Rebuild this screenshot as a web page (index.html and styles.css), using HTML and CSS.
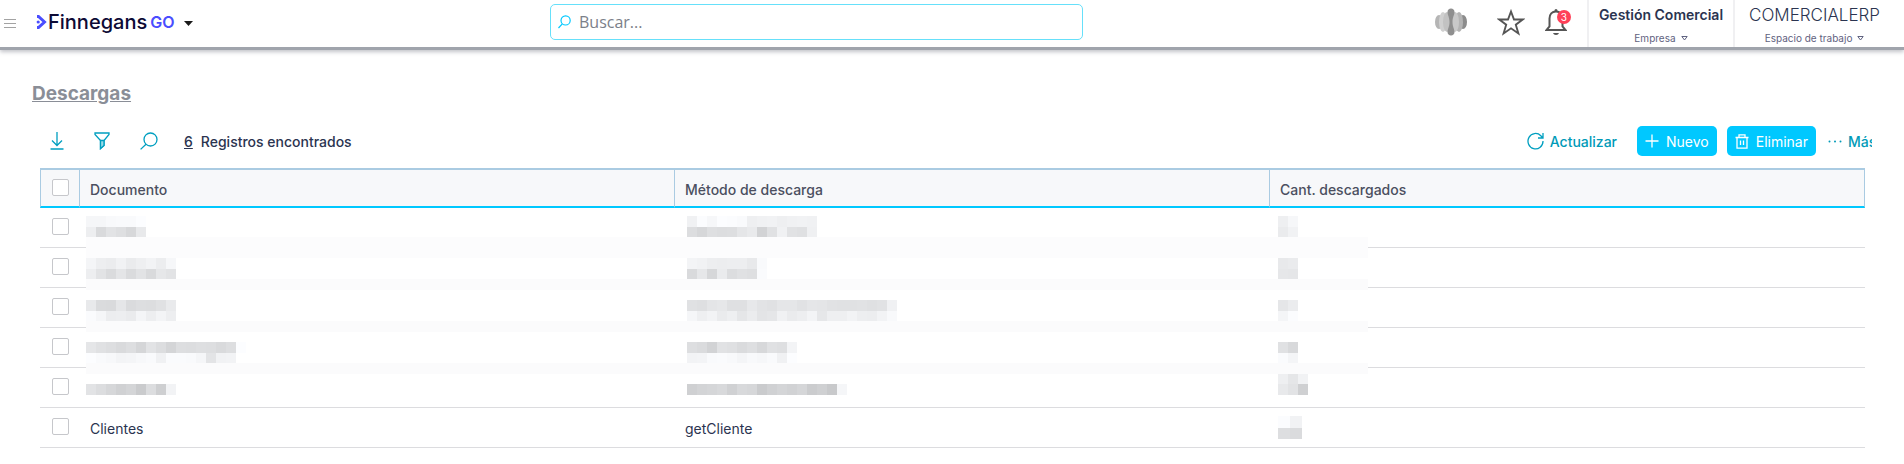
FILE: index.html
```html
<!doctype html>
<html lang="es">
<head>
	<meta charset="utf-8">
	<title>Descargas</title>
	<link rel="stylesheet" href="styles.css">
</head>
<body>
	<header class="topbar">
		<div class="topbar-left">
			<button class="icon-btn menu" type="button" aria-label="Menú">
				<svg width="12" height="12" viewBox="0 0 12 12"><path d="M0 1.5h12M0 5.5h12M0 9.5h12" stroke="#a3a3a3"/></svg>
			</button>
			<a class="brand" href="#">
				<svg width="11" height="14" viewBox="0 0 11 14" fill="none" stroke="#4a4dff" stroke-width="3"><path d="M1 1.5h1.5L8.5 7l-6 5.500H1"/><circle cx="2.200" cy="7" r="1.600" fill="#4a4dff" stroke="none"/></svg>
				<span class="brand-name">Finnegans</span><span class="brand-go">GO</span>
			</a>
			<button class="icon-btn" type="button" aria-label="Productos">
				<svg width="9" height="5" viewBox="0 0 9 5"><path d="M0 0h9L4.500 5z" fill="#1a1a1a"/></svg>
			</button>
		</div>
		<label class="search">
			<svg width="13" height="14" viewBox="0 0 13 14" fill="none" stroke="#00c8ff" stroke-width="1.2"><circle cx="7.6" cy="5.4" r="4.6"/><path d="M4.300 8.800L.5 13"/></svg>
			<input type="text" placeholder="Buscar..." aria-label="Buscar">
		</label>
		<div class="topbar-right">
			<button class="icon-btn assistant" type="button" aria-label="Asistente">
				<svg width="32" height="28" viewBox="0 0 32 28">
					<ellipse cx="4" cy="14" rx="4" ry="7" fill="#b5b5b5"/>
					<ellipse cx="28" cy="14" rx="4" ry="7" fill="#8c8c8c"/>
					<ellipse cx="8" cy="14" rx="4" ry="10" fill="#d0d0d0"/>
					<ellipse cx="24" cy="14" rx="4" ry="10" fill="#b4b4b4"/>
					<ellipse cx="12" cy="14" rx="4" ry="10" fill="#c2c2c2"/>
					<ellipse cx="20" cy="14" rx="4" ry="10" fill="#c9c9c9"/>
					<path d="M16 .5c2 0 3.500 1.500 3.500 3.500 0 3-2 5-2 10s2 7 2 10c0 2-1.500 3.500-3.500 3.500s-3.500-1.500-3.500-3.500c0-3 2-5 2-10s-2-7-2-10C12.500 2 14 .5 16 .5z" fill="#8f8f8f"/>
				</svg>
			</button>
			<button class="icon-btn" type="button" aria-label="Favoritos">
				<svg width="28" height="27" viewBox="0 0 28 27" fill="none" stroke="#555" stroke-width="1.900"><path d="M14 2.500l3 8h8.800l-7 5.200 2.600 8.800-7.400-5.200-7.400 5.200 2.600-8.800-7-5.200H11z"/></svg>
			</button>
			<button class="icon-btn bell" type="button" aria-label="Notificaciones">
				<svg width="22" height="26" viewBox="0 0 22 26"><path d="M11 2.500c-4 0-6.500 3-6.500 7v8L1.500 21h19l-3-3.500v-8c0-4-2.500-7-6.500-7z" fill="none" stroke="#555" stroke-width="2"/><path d="M9.500 2.500V1.500a1.500 1.500 0 0 1 3 0v1zM8 24h6c-.5 1.300-1.500 2-3 2s-2.500-.7-3-2z" fill="#555"/></svg>
				<span class="badge">3</span>
			</button>
			<button class="selector" type="button">
				<span class="selector-name company">Gestión Comercial</span>
				<span class="selector-label">Empresa <svg width="7" height="5" viewBox="0 0 7 5"><path d="M.8.5h5.400L3.500 4z" fill="none" stroke="#5f6280"/></svg></span>
			</button>
			<button class="selector workspace" type="button">
				<span class="selector-name">COMERCIALERP</span>
				<span class="selector-label">Espacio de trabajo <svg width="7" height="5" viewBox="0 0 7 5"><path d="M.8.5h5.400L3.500 4z" fill="none" stroke="#5f6280"/></svg></span>
			</button>
		</div>
	</header>

	<main>
		<h1><a href="#">Descargas</a></h1>

		<div class="toolbar">
			<div class="tools">
				<button class="icon-btn" type="button" aria-label="Descargar">
					<svg width="14" height="18" viewBox="0 0 14 18"><path d="M7 0v13M2 8.500L7 13.500l5-5M.5 17h13"/></svg>
				</button>
				<button class="icon-btn" type="button" aria-label="Filtrar">
					<svg width="16" height="18" viewBox="0 0 16 18"><path d="M1 1h14v1.500L10 8.500v5L6.500 16.500v-8L1 2.500z"/><path d="M6.500 8.500H10v5l-3.500 3z" fill="#9adbe8"/></svg>
				</button>
				<button class="icon-btn" type="button" aria-label="Buscar en la lista">
					<svg width="18" height="18" viewBox="0 0 18 18"><circle cx="10.500" cy="7.500" r="6.500"/><path d="M6 12.200L.6 17.400"/></svg>
				</button>
				<p class="count"><a href="#">6</a>Registros encontrados</p>
			</div>
			<div class="actions">
				<button class="link-btn refresh" type="button">
					<svg width="17" height="18" viewBox="0 0 17 18"><path d="M16 9A7.500 7.700 0 1 1 13.800 3.700L16 6M16 1v5h-5"/></svg>
					Actualizar
				</button>
				<button class="btn" type="button">
					<svg width="14" height="14" viewBox="0 0 14 14"><path d="M7 .5v13M.5 7h13"/></svg>
					Nuevo
				</button>
				<button class="btn" type="button">
					<svg width="14" height="15" viewBox="0 0 14 15"><path d="M.5 3.500h13M4 3.500V.8h6v2.700M2 3.500v10.700h10V3.500M5.500 6.500v4.500M8.500 6.500v4.500"/></svg>
					Eliminar
				</button>
				<button class="link-btn more" type="button">
					<svg width="14" height="3" viewBox="0 0 14 3"><g fill="#009ab8" stroke="none"><circle cx="1.500" cy="1.500" r="1"/><circle cx="7" cy="1.500" r="1"/><circle cx="12.500" cy="1.500" r="1"/></g></svg>
					Más
				</button>
			</div>
		</div>

		<div class="grid">
			<table>
				<thead>
					<tr>
						<th class="check"><input type="checkbox" aria-label="Seleccionar todo"></th>
						<th>Documento</th>
						<th>Método de descarga</th>
						<th>Cant. descargados</th>
					</tr>
				</thead>
				<tbody>
					<tr><td class="check"><input type="checkbox" aria-label="Fila 1"></td><td></td><td></td><td></td></tr>
					<tr><td class="check"><input type="checkbox" aria-label="Fila 2"></td><td></td><td></td><td></td></tr>
					<tr><td class="check"><input type="checkbox" aria-label="Fila 3"></td><td></td><td></td><td></td></tr>
					<tr><td class="check"><input type="checkbox" aria-label="Fila 4"></td><td></td><td></td><td></td></tr>
					<tr><td class="check"><input type="checkbox" aria-label="Fila 5"></td><td></td><td></td><td></td></tr>
					<tr>
						<td class="check"><input type="checkbox" aria-label="Fila 6"></td>
						<td>Clientes</td>
						<td>getCliente</td>
						<td class="masked"><svg class="mosaic" id="total-6" width="24" height="23"></svg></td>
					</tr>
				</tbody>
			</table>
			<div class="mask">
				<svg class="mosaic" id="documents" width="160" height="179"></svg>
				<svg class="mosaic" id="methods" width="220" height="179"></svg>
				<svg class="mosaic" id="totals" width="40" height="179"></svg>
			</div>
		</div>
	</main>
	<script src="mosaic.js"></script>
</body>
</html>
```
FILE: styles.css
```css
*
{
	box-sizing:border-box;
}
body
{
	margin:0;
	background-color:white;
	color:#2b3450;
	font-family:Inter, "Open Sans", sans-serif;
	font-size:14px;
}
button
{
	padding:0;
	border:0;
	background:none;
	color:inherit;
	font:inherit;
}
svg
{
	display:block;
	flex:none;
}
.icon-btn
{
	display:flex;
	align-items:center;
}

/* top bar */
.topbar
{
	display:grid;
	grid-template-columns:550fr 533fr 821fr;
	height:50px;
	border-bottom:3px solid #a0a4ac;
	box-shadow:0 2px 4px rgba(80,84,100,.35);
}
.topbar-left
{
	display:flex;
	align-items:center;
	padding:0 4px;
}
.menu
{
	margin-right:20px;
}
.brand
{
	display:flex;
	align-items:center;
	margin-right:10px;
	padding-bottom:4px;
	text-decoration:none;
}
.brand-name
{
	margin-left:1px;
	color:#0d0a35;
	font-size:20px;
	font-weight:500;
}
.brand-go
{
	margin-left:3px;
	color:#4a4dff;
	font-size:16px;
	font-weight:600;
}
.search
{
	display:flex;
	align-items:center;
	gap:6px;
	height:36px;
	margin-top:4px;
	padding:0 7px;
	border:1px solid #66e0fa;
	border-radius:5px;
}
.search input
{
	flex:1;
	min-width:0;
	border:0;
	outline:0;
	background:none;
	font-family:"Open Sans", sans-serif;
	font-size:16px;
}
.search input::placeholder
{
	color:#7b8089;
	opacity:1;
}
.topbar-right
{
	display:flex;
	justify-content:flex-end;
	align-items:stretch;
}
.topbar-right .icon-btn
{
	margin-right:20px;
	padding-bottom:3px;
}
.topbar-right .assistant
{
	margin-right:30px;
}
.bell
{
	position:relative;
}
.badge
{
	position:absolute;
	top:10px;
	right:-4px;
	width:14px;
	height:14px;
	border-radius:50%;
	background-color:#ff4058;
	color:white;
	font-size:10px;
	line-height:14px;
}
.selector
{
	display:flex;
	flex-direction:column;
	align-items:center;
	padding:4px 10px 0;
	border-left:2px solid #f0f0f2;
}
.workspace
{
	padding:4px 24px 0 14px;
}
.selector-name
{
	font-size:17px;
	line-height:22px;
	font-weight:300;
}
.company
{
	font-size:14px;
	font-weight:600;
}
.selector-label
{
	display:flex;
	align-items:center;
	gap:5px;
	margin-top:5px;
	color:#5f6280;
	font-size:10px;
	line-height:14px;
}

/* content */
main
{
	padding:32px 32px 0;
}
h1
{
	margin:0;
	font-size:19px;
	line-height:24px;
}
h1 a
{
	color:#8a8e97;
}
.toolbar
{
	display:flex;
	justify-content:space-between;
	height:62px;
	padding-top:20px;
}
.tools, .actions
{
	display:flex;
	align-items:center;
	height:30px;
}
.tools
{
	gap:30px;
	padding-left:18px;
}
.toolbar svg
{
	fill:none;
	stroke:#009fc0;
	stroke-width:1.3;
}
.count
{
	margin:0 0 0 -4px;
	font-weight:500;
}
.count a
{
	margin-right:8px;
	color:inherit;
}
.actions
{
	gap:10px;
}
.btn, .link-btn
{
	display:flex;
	align-items:center;
	height:30px;
	white-space:nowrap;
}
.btn
{
	gap:7px;
	padding:0 8px;
	border-radius:5px;
	background-color:#00c8ff;
	color:white;
}
.toolbar .btn svg
{
	stroke:white;
}
.link-btn
{
	gap:6px;
	color:#009ab8;
	font-weight:500;
}
.refresh
{
	margin-right:10px;
}
.more
{
	width:46px;
	padding-left:2px;
	overflow:hidden;
}

/* records */
.grid
{
	position:relative;
	margin:0 7px 0 8px;
}
table
{
	width:100%;
	border-collapse:separate;
	border-spacing:0;
	table-layout:fixed;
}
th, td
{
	height:40px;
	padding:2px 10px 0;
	border-bottom:1px solid #dcdcdf;
	text-align:left;
	font-weight:400;
}
th
{
	border-top:2px solid #aacbe2;
	border-right:1px solid #aacbe2;
	border-bottom:2px solid #00c8ff;
	background-color:#f7f8fa;
	color:#4b4f60;
	font-weight:500;
}
th:first-child
{
	border-left:1px solid #aacbe2;
}
.check
{
	width:40px;
	padding:0 0 2px 12px;
}
th.check
{
	padding-left:11px;
}
.check input
{
	display:block;
	appearance:none;
	width:17px;
	height:17px;
	margin:0;
	border:1px solid #c6c7cb;
	border-radius:2px;
	background-color:white;
}
.masked
{
	padding:0 8px;
}
.mask
{
	position:absolute;
	top:48px;
	left:40px;
	right:0;
	display:grid;
	grid-template-columns:repeat(3, 1fr);
}
.mask svg
{
	width:100%;
	padding-left:12px;
	background:linear-gradient(white 21px, #fcfcfd 21px 42px, white 42px 63px, #fbfbfc 63px 74px, white 74px 105px, #fbfbfc 105px 116px, white 116px 147px, #fbfbfc 147px 158px, white 158px);
}
.mask svg:first-child
{
	width:calc(100% - 6px);
	margin-left:6px;
	padding-left:0;
}
.mask svg:last-child
{
	width:98px;
	padding-left:8px;
}
```
FILE: mosaic.js
```js
// each row: top, height, grey level of every cell
var mosaics = {
	"documents": [
		[0, 11, "f5 f5 f8 f9 f9 fc"],
		[11, 10, "ed d9 e2 de d7 e8"],
		[42, 11, "f4 ed eb f1 ea ee f2 ec f6"],
		[53, 10, "ed e2 da e4 da e2 d9 e6 e2"],
		[84, 11, "e8 da d9 e5 da dd dc e0 e9"],
		[95, 10, "fa f5 ec ed ea f4 ed f3 ed"],
		[126, 11, "e5 e0 dd d9 dd d5 e2 dc d4 dd dc de dd d9 dd fc"],
		[137, 10, "fc f9 f7 f3 f4 f7 f9 f0 fa fa f9 f5 e3 f1 f2"],
		[168, 11, "e2 dc d6 d0 d4 ca dc ce f2"]
	],
	"methods": [
		[0, 11, "f0 fb f6 fc fb f9 ee f0 f1 ee f0 f1 f0"],
		[11, 10, "dc d6 de dc dd e5 e9 d2 e0 f0 e1 df ef"],
		[42, 11, "f3 f1 ed ec ed ed e8 f9"],
		[53, 10, "d9 e6 d6 ea dc e0 de fa"],
		[84, 11, "e0 de e4 e6 df df e7 e2 e0 e5 e5 e1 e5 e4 e1 e0 e0 e1 df e1 f0"],
		[95, 10, "f5 ee f2 ea ee e5 eb e3 e5 f0 ea ed f3 e6 ee ee f2 ed ec f2 f8"],
		[126, 11, "dd da d2 e1 df da de d7 e0 de f3"],
		[137, 10, "f2 f3 f9 fa f8 f4 f8 f6 f9 f0 fc"],
		[168, 11, "cf d3 d5 d8 d0 d8 d6 ca d0 d4 d1 d5 cb cf c8 f5"]
	],
	"totals": [
		[0, 11, "ee f6"],
		[11, 10, "ea f1"],
		[42, 11, "e8 ea"],
		[53, 10, "e6 e5"],
		[84, 11, "e5 eb"],
		[95, 10, "f4 fb"],
		[126, 11, "e0 d8"],
		[137, 10, "fa f4"],
		[158, 10, "ee e5 f1"],
		[168, 11, "e8 e2 cf"]
	],
	"total-6": [
		[0, 12, "fb f1"],
		[12, 11, "dd da"]
	]
};

function drawMosaic(id, cellWidth){
	var svg = document.getElementById(id);
	mosaics[id].forEach(function(row){
		row[2].split(" ").forEach(function(level, i){
			var grey = parseInt(level, 16);
			var cell = document.createElementNS("http://www.w3.org/2000/svg", "rect");
			cell.setAttribute("x", i*cellWidth);
			cell.setAttribute("y", row[0]);
			cell.setAttribute("width", cellWidth);
			cell.setAttribute("height", row[1]);
			cell.setAttribute("fill", "rgb("+grey+","+(grey+1)+","+(grey+3)+")");
			svg.appendChild(cell);
		});
	});
}

drawMosaic("documents", 10);
drawMosaic("methods", 10);
drawMosaic("totals", 10);
drawMosaic("total-6", 12);
```
